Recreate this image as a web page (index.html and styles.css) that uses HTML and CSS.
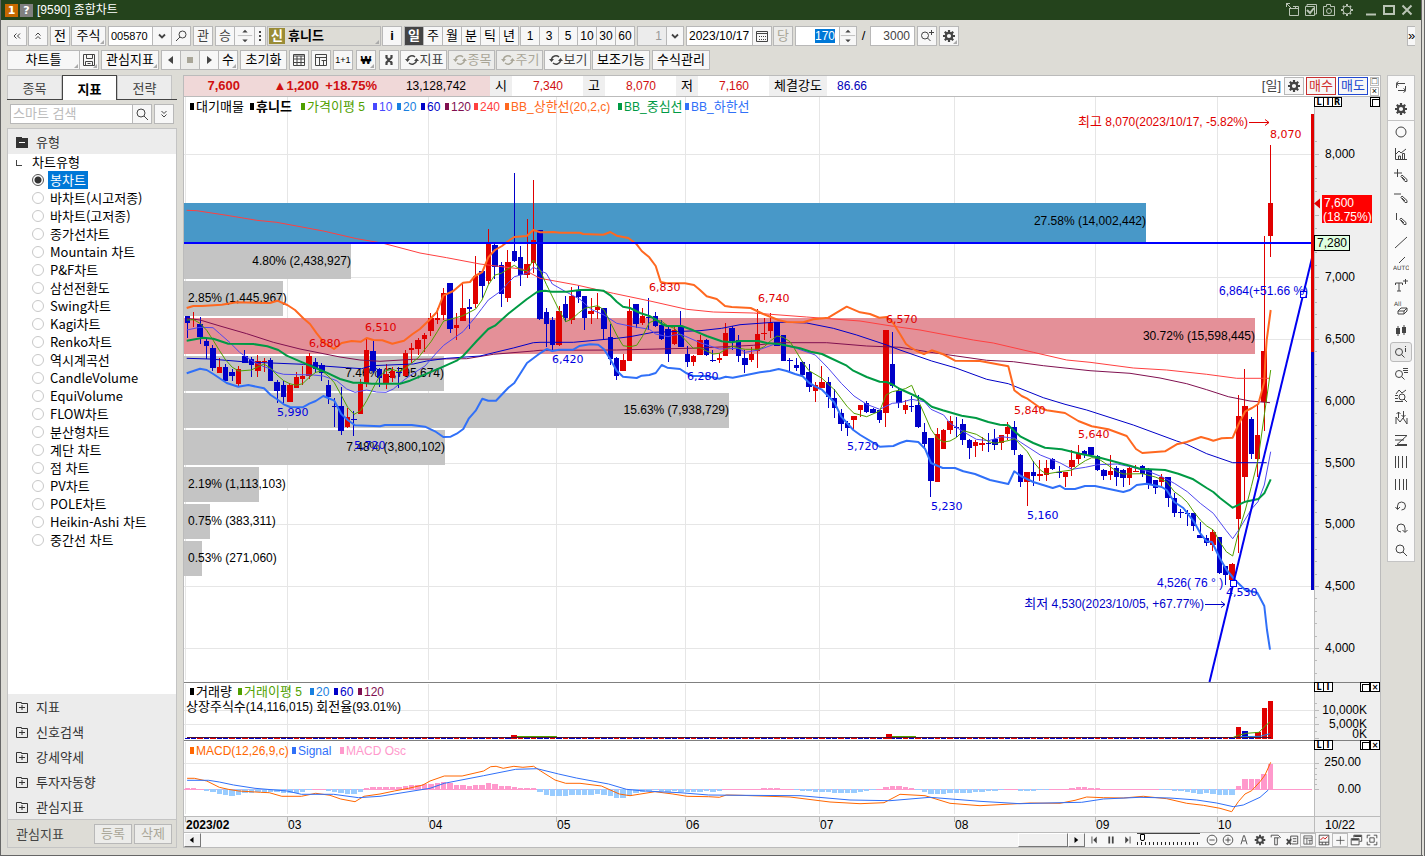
FILE: index.html
```html
<!DOCTYPE html>
<html lang="ko">
<head>
<meta charset="utf-8">
<title>[9590] 종합차트</title>
<link rel="stylesheet" href="styles.css">
</head>
<body>
<svg class="sprite" aria-hidden="true">
  <symbol id="gear" viewBox="0 0 16 16"><path d="M8 2v2.500M8 11.500V14M2 8h2.500M11.500 8H14M3.800 3.800l1.800 1.800M10.400 10.400l1.800 1.800M12.200 3.800l-1.800 1.800M5.600 10.400l-1.800 1.800" stroke-width="2.200"/><circle cx="8" cy="8" r="3.200" stroke-width="2.200"/></symbol>
  <symbol id="gear-thin" viewBox="0 0 16 16"><circle cx="8" cy="8" r="4"/><path d="M8 2v2M8 12v2M2 8h2M12 8h2M4 4l1 1M11 11l1 1M12 4l-1 1M5 11l-1 1" stroke-width="2"/></symbol>
  <symbol id="search" viewBox="0 0 16 16"><circle cx="7" cy="7" r="4"/><path d="M10 10l4 4"/></symbol>
  <symbol id="search-l" viewBox="0 0 16 16"><circle cx="9.500" cy="6.500" r="3.500"/><path d="M7 9l-4 4"/></symbol>
  <symbol id="down" viewBox="0 0 16 16"><path d="M5 6.500l3 3 3-3" stroke-width="1.800"/></symbol>
  <symbol id="spin" viewBox="0 0 16 20"><path d="M0 9.500h16" stroke="#bbb"/><path class="fill" d="M5 6l3-3 3 3zM5 14l3 3 3-3z"/></symbol>
  <symbol id="cycle" viewBox="0 0 16 16"><path d="M3.500 7a4.500 4 0 0 1 7.500-2M12.500 9a4.500 4 0 0 1-7.500 2" stroke-width="1.500"/><path class="fill" d="M1 7h5l-2.500 3zM10 9h5l-2.500-3z"/></symbol>
  <symbol id="save" viewBox="0 0 16 16"><path d="M2.500 2.500h11v11h-11zM5.500 2.500v4h6v-4M4.500 13.500v-4h7v4M6.500 11.500h3"/></symbol>
  <symbol id="table" viewBox="0 0 16 16"><path d="M2.500 2.500h11v11h-11zM2.500 4h11M2.500 7h11M2.500 10.500h11M6 4v9M10 4v9"/></symbol>
  <symbol id="panes" viewBox="0 0 16 16"><path d="M2.500 2.500h11v11h-11zM2.500 5.500h11M6.500 5.500v8M8.500 8.500h5M10.500 8.500v5"/></symbol>
  <symbol id="tool" viewBox="0 0 16 16"><path d="M5.500 3v2.500l5 5V13M10.500 3v2.500l-5 5V13" stroke-width="2.200"/></symbol>
  <symbol id="calendar" viewBox="0 0 16 16"><path d="M2.500 3.500h11v10h-11zM2 5.500h12"/><path d="M5 8.500h7M5 11.500h7" stroke-dasharray="1 1"/></symbol>
  <symbol id="stop" viewBox="0 0 16 16"><path class="fill" d="M5 5h6v6H5z"/></symbol>
  <symbol id="left" viewBox="0 0 16 16"><path class="fill" d="M10 4v8L5 8z"/></symbol>
  <symbol id="right" viewBox="0 0 16 16"><path class="fill" d="M6 4v8l5-4z"/></symbol>
  <symbol id="chev-l" viewBox="0 0 16 16"><path d="M7.500 5.500L5 8l2.500 2.500M11 5.500L8.500 8l2.500 2.500"/></symbol>
  <symbol id="chev-u" viewBox="0 0 16 16"><path d="M5.500 7.500L8 5l2.500 2.500M5.500 11L8 8.500l2.500 2.500"/></symbol>
  <symbol id="chev-d" viewBox="0 0 16 16"><path d="M5.500 5L8 7.500 10.500 5M5.500 8.500L8 11l2.500-2.500"/></symbol>
  <symbol id="dots" viewBox="0 0 8 16"><path class="fill" d="M3 3h2v2H3zM3 7h2v2H3zM3 11h2v2H3z"/></symbol>
  <symbol id="search-plus" viewBox="0 0 16 16"><circle cx="6" cy="7.500" r="3.500"/><path d="M8.500 10l3 3M12.500 2v5M10 4.500h5"/></symbol>
  <symbol id="pin-win" viewBox="0 0 16 16"><path d="M4.500 7v6.500h9v-9H8M4 6.500h10M10.500 4v2M1 1.500h4M1.500 1v4M2 2l4 4"/></symbol>
  <symbol id="checks" viewBox="0 0 16 16"><path d="M2.500 4.500h9v9h-9zM4 4V2.500h9.500V12H12"/><path d="M4 8l3 3 4-5" stroke-width="2"/></symbol>
  <symbol id="camera" viewBox="0 0 16 16"><path d="M2.500 4.500h3v-2h4v2h4v9h-11z"/><circle cx="8" cy="9" r="2.500"/></symbol>
  <symbol id="min" viewBox="0 0 16 16"><path d="M3 12.500h10" stroke-width="2"/></symbol>
  <symbol id="max" viewBox="0 0 16 16"><path d="M3 4h10v8H3z" stroke-width="2"/></symbol>
  <symbol id="close" viewBox="0 0 16 16"><path d="M3.500 3.500l9 9M12.500 3.500l-9 9" stroke-width="2"/></symbol>
  <symbol id="loop" viewBox="0 0 16 16"><path d="M3.500 9V6q0-1.500 1.500-1.500h7M5.500 2.500l-2.500 2 2.500 2M12.500 7v3q0 1.500-1.500 1.500H5M10.500 9.500l2.500 2-2.500 2"/></symbol>
  <symbol id="circle" viewBox="0 0 16 16"><circle cx="8" cy="8" r="5"/></symbol>
  <symbol id="bars" viewBox="0 0 16 16"><path d="M2.500 2v11.500H14M5.500 13v-3h2v3M9.500 13V7.500h2V13M3 8l3-3 2 2 5-4"/></symbol>
  <symbol id="draw-cross" viewBox="0 0 16 16"><path d="M1 5h8M4.500 1v8M8 8.500l1-1.500 5 4.500v2h-2zM9 9l3 3"/></symbol>
  <symbol id="draw-h" viewBox="0 0 16 16"><path d="M1 4h7M8 7.500l1-1.500 5 4.500v2h-2zM9 8l3 3"/></symbol>
  <symbol id="draw-v" viewBox="0 0 16 16"><path d="M3.500 1v7M7 7.500l1-1.500 5 4.500v2h-2zM8 8l3 3"/></symbol>
  <symbol id="slash" viewBox="0 0 16 16"><path d="M2 14L14 3"/></symbol>
  <symbol id="auto" viewBox="0 0 16 16"><path d="M6 7l6-6"/><text x="0" y="14">AUTO</text></symbol>
  <symbol id="text-plus" viewBox="0 0 16 16"><path d="M2.500 7V5h7v2M6 5v8M4 13h4M10 3h5M12.500 1v5"/></symbol>
  <symbol id="all" viewBox="0 0 16 16"><text x="1" y="6">All</text><path d="M5 11l3-3h6l-3 3zM5 11v3h6v-3M14 8v3l-3 3"/></symbol>
  <symbol id="candles" viewBox="0 0 16 16"><path class="fill" d="M3 6h4v6H3zM9 5h4v6H9z"/><path d="M5 4v10M11 3v10"/></symbol>
  <symbol id="search-i" viewBox="0 0 16 16"><circle cx="6" cy="8" r="3.500"/><path d="M8.500 10.500l3 3M12.500 2v1M12.500 4v4"/></symbol>
  <symbol id="search-list" viewBox="0 0 16 16"><circle cx="6" cy="8" r="3.500"/><path d="M8.500 10.500l3 3M10 2.500h5M10 4.500h5M11 6.500h4"/></symbol>
  <symbol id="search-chart" viewBox="0 0 16 16"><path d="M3 6l3-4 3 3 4-3M2 7.500h3M2 10.500h3M2 13.500h8"/><circle cx="9" cy="9" r="3"/><path d="M11 11l3 3"/></symbol>
  <symbol id="signal" viewBox="0 0 16 16"><path d="M3 14V7l4 5 3-4 4 6V8M5.500 8V2M3.500 4l2-2 2 2M10.500 1v7M8.500 5l2 2 2-2"/></symbol>
  <symbol id="zig" viewBox="0 0 16 16"><path d="M2 3.500h12L4 12.500h10M2 8h9M2 13.500h12"/></symbol>
  <symbol id="fib" viewBox="0 0 16 16"><path d="M2.500 2v12M5.500 2v12M9.500 2v12M13.500 2v12"/></symbol>
  <symbol id="vlines" viewBox="0 0 16 16"><path d="M2.500 3v11M6.500 3v11M10.500 3v11M13.500 3v11"/></symbol>
  <symbol id="undo" viewBox="0 0 16 16"><path d="M4.500 11V8a4 4 0 1 1 4 4M2.500 9l2 2.500 2.500-2.500"/></symbol>
  <symbol id="redo" viewBox="0 0 16 16"><path d="M8 12a4 4 0 1 1 4-4v4M9.500 10l2.500 2.500 2.500-2.500"/></symbol>
  <symbol id="minus-c" viewBox="0 0 16 16"><circle cx="8" cy="8" r="5.500"/><path d="M5 8h6"/></symbol>
  <symbol id="plus-c" viewBox="0 0 16 16"><circle cx="8" cy="8" r="5.500"/><path d="M5 8h6M8 5v6"/></symbol>
  <symbol id="compass" viewBox="0 0 16 16"><path d="M4.500 13l3-10h1l3 10M6 9h4"/></symbol>
  <symbol id="hammer" viewBox="0 0 16 16"><path d="M2.500 5V2.500h8l3 3M6.500 5.500v8h3v-8M6 5.500h6"/></symbol>
  <symbol id="xls" viewBox="0 0 16 16"><path d="M6.500 10V3.500h8v9H8M9 6.500h4M9 9.500h4"/><path d="M2 7l5 6M7 7l-5 6" stroke-width="2"/></symbol>
  <symbol id="chart-red" viewBox="0 0 16 16"><path d="M2.500 2.500h11v11h-11zM2.500 10.500h11M6 10.500v3M10 10.500v3"/><path d="M4 8l3-3 2 2 3-3" stroke="#c00"/></symbol>
  <symbol id="plus" viewBox="0 0 16 16"><path d="M8.500 3v11M3 8.500h11"/></symbol>
  <symbol id="windows" viewBox="0 0 16 16"><path d="M5.500 5V2.500h9v7H12M2.500 6.500h9v7h-9z"/><path d="M3 7.500h8M6 3.500h8" stroke-width="2"/></symbol>
  <symbol id="full" viewBox="0 0 16 16"><path d="M2.500 6V2.500H6M10 2.500h3.500V6M13.500 10v3.500H10M6 13.500H2.500V10M5.500 5.500h5v5h-5z"/></symbol>
  <symbol id="folder" viewBox="0 0 12 12"><path d="M.5 1.500h5v1h6v9H.5zM3 6.500h6M6 4v5"/></symbol>
  <symbol id="folder-open" viewBox="0 0 12 12"><path class="fill" d="M0 1h6v1h6v10H0z"/><path d="M3 6.500h6" stroke="#fff"/></symbol>
  <symbol id="first" viewBox="0 0 16 16"><path d="M4.500 4v8"/><path class="fill" d="M10 4v8L6 8z"/></symbol>
  <symbol id="pause" viewBox="0 0 16 16"><path d="M6 4v8M10 4v8" stroke-width="2"/></symbol>
  <symbol id="last" viewBox="0 0 16 16"><path d="M11.500 4v8"/><path class="fill" d="M6 4v8l4-4z"/></symbol>
</svg>

<div class="window">
  <header class="titlebar">
    <span class="win-no">1</span><span class="win-help">?</span>
    <h1 class="win-title">[9590] 종합차트</h1>
    <div class="win-actions">
      <button class="bare" aria-label="분리"><svg><use href="#pin-win"/></svg></button>
      <button class="bare" aria-label="선택"><svg><use href="#checks"/></svg></button>
      <button class="bare" aria-label="캡처"><svg><use href="#camera"/></svg></button>
      <button class="bare" aria-label="설정"><svg><use href="#gear-thin"/></svg></button>
    </div>
    <div class="win-actions">
      <button class="bare" aria-label="최소화"><svg><use href="#min"/></svg></button>
      <button class="bare" aria-label="최대화"><svg><use href="#max"/></svg></button>
      <button class="bare" aria-label="닫기"><svg><use href="#close"/></svg></button>
    </div>
  </header>

  <div class="toolbars">
    <div class="bar">
      <button class="btn w20" aria-label="접기"><svg><use href="#chev-l"/></svg></button>
      <button class="btn w20 near" aria-label="위로"><svg><use href="#chev-u"/></svg></button>
      <button class="btn w20">전</button>
      <button class="btn w34 corner near">주식</button>
      <div class="group">
        <input class="field code w45" aria-label="종목코드" value="005870">
        <button class="btn w20" aria-label="목록"><svg><use href="#down"/></svg></button>
        <button class="btn w20" aria-label="종목 찾기"><svg><use href="#search-l"/></svg></button>
      </div>
      <button class="btn w20 grey">관</button>
      <div class="group">
        <button class="btn w20 grey">승</button>
        <button class="btn w21" aria-label="위아래"><svg class="tall"><use href="#spin"/></svg></button>
        <button class="btn w12" aria-label="더보기"><svg class="slim"><use href="#dots"/></svg></button>
      </div>
      <div class="stock near corner"><span class="badge">신</span><b>휴니드</b></div>
      <button class="btn w20 near"><b>i</b></button>
      <div class="group">
        <button class="btn w20 on">일</button><button class="btn w20">주</button><button class="btn w20">월</button><button class="btn w20">분</button><button class="btn w20">틱</button><button class="btn w20">년</button>
      </div>
      <div class="group near num">
        <button class="btn w20">1</button><button class="btn w20">3</button><button class="btn w20">5</button><button class="btn w20">10</button><button class="btn w20">30</button><button class="btn w20">60</button>
      </div>
      <div class="group">
        <input class="field w30 end off" aria-label="주기" value="1">
        <button class="btn w18" aria-label="주기 목록"><svg><use href="#down"/></svg></button>
      </div>
      <div class="group">
        <input class="field w67" aria-label="날짜" value="2023/10/17">
        <button class="btn w20" aria-label="달력"><svg><use href="#calendar"/></svg></button>
      </div>
      <button class="btn w20 dim near">당</button>
      <div class="group">
        <span class="field w45 end"><span class="picked">170</span></span>
        <button class="btn w18" aria-label="개수 조절"><svg class="tall"><use href="#spin"/></svg></button>
      </div>
      <span class="slash">/</span>
      <input class="field w45 end" aria-label="전체 개수" value="3000">
      <button class="btn w20" aria-label="확대"><svg><use href="#search-plus"/></svg></button>
      <button class="btn w20 corner" aria-label="환경설정"><svg><use href="#gear"/></svg></button>
      <button class="btn w8 last">»</button>
    </div>
    <div class="bar">
      <div class="group">
        <button class="btn w72 corner">차트틀</button>
        <button class="btn w20 corner" aria-label="저장"><svg><use href="#save"/></svg></button>
      </div>
      <button class="btn w58 corner">관심지표</button>
      <div class="group">
        <button class="btn w20" aria-label="이전"><svg><use href="#left"/></svg></button>
        <button class="btn w20 dim" aria-label="정지"><svg><use href="#stop"/></svg></button>
        <button class="btn w20" aria-label="다음"><svg><use href="#right"/></svg></button>
        <button class="btn w20 corner">수</button>
      </div>
      <button class="btn w46">초기화</button>
      <button class="btn w20" aria-label="표"><svg><use href="#table"/></svg></button>
      <button class="btn w20" aria-label="분할"><svg><use href="#panes"/></svg></button>
      <button class="btn w20 tiny">1+1</button>
      <button class="btn w20 corner far won"><b>₩</b></button>
      <button class="btn w20 far" aria-label="도구"><svg><use href="#tool"/></svg></button>
      <button class="btn w46 near grey"><svg><use href="#cycle"/></svg>지표</button>
      <button class="btn w46 near dim"><svg><use href="#cycle"/></svg>종목</button>
      <button class="btn w46 near dim"><svg><use href="#cycle"/></svg>주기</button>
      <button class="btn w46 near grey"><svg><use href="#cycle"/></svg>보기</button>
      <button class="btn w58 near">보조기능</button>
      <button class="btn w58">수식관리</button>
    </div>
  </div>

  <main class="main">
    <aside class="side">
      <nav class="tabs"><button class="tab">종목</button><button class="tab active">지표</button><button class="tab">전략</button></nav>
      <div class="find">
        <div class="group grow">
          <input class="field grow" aria-label="스마트 검색" placeholder="스마트 검색">
          <button class="btn w20" aria-label="검색"><svg><use href="#search"/></svg></button>
        </div>
        <button class="btn w20" aria-label="펼치기"><svg><use href="#chev-d"/></svg></button>
      </div>
      <div class="tree">
        <button class="folder"><svg><use href="#folder-open"/></svg>유형</button>
        <div class="branch">차트유형</div>
        <div class="leaves" id="types"></div>
        <div class="folders">
          <button class="folder"><svg><use href="#folder"/></svg>지표</button>
          <button class="folder"><svg><use href="#folder"/></svg>신호검색</button>
          <button class="folder"><svg><use href="#folder"/></svg>강세약세</button>
          <button class="folder"><svg><use href="#folder"/></svg>투자자동향</button>
          <button class="folder"><svg><use href="#folder"/></svg>관심지표</button>
        </div>
        <div class="side-foot"><span class="grow">관심지표</span><button class="btn w38 dim">등록</button><button class="btn w38 dim">삭제</button></div>
      </div>
    </aside>

    <section class="chart">
      <div class="quote">
        <div class="now"><b class="c1">7,600</b><b class="c2">▲1,200</b><b class="c3">+18.75%</b><span class="c4">13,128,742</span></div>
        <span class="key">시</span><span class="val">7,340</span>
        <span class="key">고</span><span class="val">8,070</span>
        <span class="key">저</span><span class="val">7,160</span>
        <span class="key wide">체결강도</span><span class="power">86.66</span>
        <span class="period">[일]</span>
        <button class="btn w20 q" aria-label="차트 설정"><svg><use href="#gear"/></svg></button>
        <button class="btn w30 q buy">매수</button>
        <button class="btn w30 q sell">매도</button>
        <div class="mini"><button aria-label="확대">□</button><button aria-label="닫기">×</button></div>
      </div>
      <div class="panel price"><svg id="price" viewBox="184 97 1196 585"></svg>
        <div class="pane-l"><button>L</button><button>I</button><button>R</button></div><div class="pane-r"><button class="box" aria-label="최대화"></button></div></div>
      <div class="panel volume"><svg id="volume" viewBox="184 682 1196 58"></svg>
        <div class="pane-l"><button>L</button><button>I</button></div><div class="pane-r"><button class="box" aria-label="최대화"></button><button aria-label="닫기">×</button></div></div>
      <div class="panel macd"><svg id="macd" viewBox="184 740 1196 76"></svg>
        <div class="pane-l"><button>L</button><button>I</button></div><div class="pane-r"><button class="box" aria-label="최대화"></button><button aria-label="닫기">×</button></div></div>
      <div class="panel time"><svg id="time" viewBox="184 816 1196 17"></svg></div>
      <div class="controls">
        <button class="scroll" aria-label="왼쪽"><svg><use href="#left"/></svg></button>
        <div class="track"><div class="thumb"></div></div>
        <button class="scroll" aria-label="오른쪽"><svg><use href="#right"/></svg></button>
        <div class="icons">
          <button class="bare" aria-label="처음"><svg><use href="#first"/></svg></button>
          <button class="bare" aria-label="일시정지"><svg><use href="#pause"/></svg></button>
          <button class="bare" aria-label="마지막"><svg><use href="#last"/></svg></button>
        </div>
        <input class="speed" type="range" aria-label="속도" min="0" max="100" value="6">
        <div class="icons">
          <button class="bare" aria-label="축소"><svg><use href="#minus-c"/></svg></button>
          <button class="bare" aria-label="확대"><svg><use href="#plus-c"/></svg></button>
          <button class="bare" aria-label="작도"><svg><use href="#compass"/></svg></button>
          <button class="bare" aria-label="설정"><svg><use href="#gear"/></svg></button>
          <button class="bare" aria-label="도구"><svg><use href="#hammer"/></svg></button>
          <button class="bare" aria-label="엑셀"><svg><use href="#xls"/></svg></button>
          <button class="bare framed" aria-label="목록"><svg><use href="#panes"/></svg></button>
          <button class="bare" aria-label="차트"><svg><use href="#chart-red"/></svg></button>
          <button class="bare framed" aria-label="십자선"><svg><use href="#plus"/></svg></button>
          <button class="bare" aria-label="창"><svg><use href="#windows"/></svg></button>
          <button class="bare" aria-label="전체화면"><svg><use href="#full"/></svg></button>
        </div>
      </div>
    </section>

    <aside class="draw" id="draw"></aside>
  </main>
</div>
<script src="chart.js"></script>
</body>
</html>
```
FILE: styles.css
```css
* { box-sizing: border-box; }
html, body { height: 100%; margin: 0; }
body, button, input {
  font-family: "Liberation Sans", "Noto Sans CJK KR", sans-serif;
  font-size: 13px;
  color: #000;
}
button { padding: 0; margin: 0; }
svg { fill: none; stroke: currentColor; }
svg .fill { fill: currentColor; stroke: none; }
symbol text { font: 6px "DejaVu Sans", sans-serif; fill: currentColor; stroke: none; }
.sprite { display: none; }
.grow { flex: 1; min-width: 0; }

.window {
  display: flex;
  flex-direction: column;
  min-height: 100vh;
  background: #dddcd6;
  border-left: 1px solid #666;
  border-right: 4px double #666;
  border-bottom: 1px solid #666;
}
.titlebar {
  display: flex;
  align-items: center;
  height: 20px;
  padding: 0 6px 0 4px;
  background: #24431c;
  color: #fff;
}
.win-no, .win-help {
  width: 13px;
  height: 13px;
  margin-right: 2px;
  background: #c86800;
  font: bold 11px/13px "DejaVu Sans", sans-serif;
  text-align: center;
}
.win-help { background: #808080; margin-right: 4px; }
.win-title { flex: 1; margin: 0; font-size: 12px; font-weight: 400; line-height: 20px; }
.win-actions { display: flex; gap: 2px; margin-left: 8px; color: #b9c4b5; }
.bare { width: 16px; height: 16px; border: 0; background: none; color: inherit; }
.bare svg { display: block; width: 16px; height: 16px; }

.toolbars { display: flex; flex-direction: column; gap: 4px; padding: 6px 6px 7px; height: 55px; }
.bar { display: flex; gap: 2px; height: 20px; }
.group { display: flex; }
.group > * + * { margin-left: -1px; }
.bar .near { margin-left: -1px; }
.bar .far { margin-left: 1px; }
.bar .last { margin-left: auto; border-right: 0; }
.btn {
  display: flex;
  align-items: center;
  justify-content: center;
  position: relative;
  height: 20px;
  border: 1px solid #b8b8b8;
  background: #f7f7f7;
  line-height: 18px;
  white-space: nowrap;
  overflow: hidden;
  flex: none;
}
.btn svg { width: 16px; height: 16px; flex: none; color: #444; }
.btn svg.tall { height: 18px; }
.btn svg.slim { width: 8px; }
.corner::after {
  content: "";
  position: absolute;
  right: 1px;
  bottom: 1px;
  border: 2px solid #aaa;
  border-top-color: transparent;
  border-left-color: transparent;
}
.num .btn { font-size: 12px; }
.tiny { font-size: 9px; }
.won { font-size: 11px; }
.grey { color: #444; }
.dim { color: #a9a698; background: #ececea; }
.dim svg { color: #a9a698; }
.on { background: #444; color: #fff; font-weight: 700; }
.field {
  height: 20px;
  padding: 0 2px;
  border: 1px solid #b8b8b8;
  background: #fff;
  font-size: 12px;
  line-height: 18px;
}
.code { font-size: 11px; }
.field::placeholder { color: #bbb; font-size: 13px; }
.end { text-align: right; padding-right: 4px; color: #444; }
.off { background: #ececec; color: #999; }
.picked { background: #0078d7; color: #fff; }
.slash { width: 9px; text-align: center; line-height: 20px; }
.stock {
  display: flex;
  align-items: center;
  gap: 3px;
  position: relative;
  width: 114px;
  padding-left: 1px;
  border: 1px solid #b8b8b8;
  line-height: 16px;
}
.badge { width: 16px; height: 16px; background: #9a8c36; color: #fff; text-align: center; font-weight: 700; }
.w8 { width: 8px; } .w12 { width: 12px; } .w18 { width: 18px; } .w20 { width: 20px; } .w21 { width: 21px; }
.w30 { width: 30px; } .w34 { width: 35px; } .w38 { width: 38px; } .w45 { width: 45px; } .w46 { width: 47px; }
.w58 { width: 58px; } .w67 { width: 67px; } .w72 { width: 73px; }

.main { display: flex; flex: 1; padding: 0 6px 7px; }

.side { display: flex; flex-direction: column; width: 170px; margin-right: 6px; }
.tabs { display: flex; height: 25px; padding-right: 5px; border-bottom: 1px solid #444; }
.tab { flex: 1; border: 1px solid #c4c4c4; border-bottom: 0; background: #ececec; color: #444; height: 24px; }
.tab.active { height: 25px; background: #fff; border-color: #444; color: #000; font-weight: 700; }
.find { display: flex; gap: 2px; padding: 4px 3px; }
.find .field { width: 80px; }
.tree { display: flex; flex-direction: column; flex: 1; border: 1px solid #c4c4c4; background: #fff; }
.folder {
  display: flex;
  align-items: center;
  gap: 8px;
  width: 100%;
  height: 25px;
  padding-left: 8px;
  border: 0;
  background: #ececec;
  color: #333;
}
.folder svg { width: 12px; height: 12px; }
.branch { height: 17px; padding-left: 24px; line-height: 17px; position: relative; }
.branch::before { content: ""; position: absolute; left: 8px; top: 6px; width: 5px; height: 5px; border: solid #444; border-width: 0 0 1px 1px; }
.leaves { flex: 1; padding-left: 24px; }
.leaf { display: flex; align-items: center; height: 18px; line-height: 18px; font-size: 13px; font-family: "Noto Sans CJK KR", sans-serif; }
.leaf label { padding: 0 2px; }
.leaf input { appearance: none; width: 12px; height: 12px; margin: 0 4px 0 0; border: 1px solid #c8c8c8; border-radius: 50%; background: #fff; }
.leaf input:checked { border-color: #555; background: radial-gradient(#333 3px, #fff 4px); }
.leaf input:checked + label { background: #0078d7; color: #fff; }
.side-foot { display: flex; align-items: center; gap: 2px; height: 28px; padding: 0 4px 0 8px; border-top: 1px solid #c4c4c4; background: #dddcd6; color: #444; }

.chart { display: flex; flex-direction: column; flex: 1; min-width: 0; border: 1px solid #bbb; background: #fff; }
.quote { display: flex; align-items: center; height: 21px; border-bottom: 1px solid #bbb; line-height: 20px; font-size: 12px; }
.now { display: grid; grid-template-columns: 56px 79px 58px 1fr; width: 306px; background: #f0d8d8; color: #d01010; text-align: right; }
.now b { font-size: 13px; }
.now .c4 { padding-right: 24px; color: #000; }
.key { width: 22px; background: #efefef; text-align: center; font-size: 13px; }
.key.wide { width: 58px; }
.val { width: 71px; padding-right: 20px; color: #d01010; text-align: right; }
.power { padding-left: 10px; color: #0000b8; }
.period { margin-left: auto; margin-right: 3px; font-size: 13px; color: #444; }
.q { height: 18px; margin-right: 2px; }
.buy { border-color: #c83030; color: #d03030; }
.sell { border-color: #2048d0; color: #2048d0; }
.mini { display: grid; gap: 1px; margin-right: 1px; }
.mini button { width: 9px; height: 9px; border: 1px solid #bbb; background: #fff; font-size: 9px; line-height: 6px; overflow: hidden; }

.panel { position: relative; min-height: 0; }
.panel > svg { display: block; width: 100%; height: 100%; stroke: none; }
.price { flex: 585 1 0; }
.volume { flex: 58 1 0; }
.macd { flex: 76 1 0; }
.time { flex: 17 1 0; }
.pane-l, .pane-r { position: absolute; top: 0; right: 0; display: flex; }
.pane-l { right: auto; left: calc(100% - 66px); }
.pane-l button, .pane-r button {
  width: 10px;
  height: 10px;
  margin-right: -1px;
  border: 1px solid #000;
  background: #fff;
  font: bold 8px/7px "DejaVu Sans", sans-serif;
  overflow: hidden;
}
.pane-r button { margin: 0; }
.pane-r .box { padding: 1px; }
.pane-r .box::before { content: ""; display: block; width: 6px; height: 6px; border: 1px solid #000; }
.num-label { font: 12px "Liberation Sans", sans-serif; }
.ko-label { font: 13px "Noto Sans CJK KR", sans-serif; }
.bold-label { font-weight: 700; }
.peak { font: 11px "DejaVu Sans", sans-serif; }

.controls { display: flex; height: 14px; background: #f7f7f7; color: #444; }
.scroll { width: 17px; height: 14px; border: 1px solid #fff; border-right-color: #777; border-bottom-color: #777; background: #f0f0f0; }
.scroll svg { display: block; width: 14px; height: 12px; color: #000; }
.track { display: flex; flex: 1; justify-content: flex-end; background: #f6f6f6; }
.thumb { width: 50px; border: 1px solid #fff; border-right-color: #777; border-bottom-color: #777; background: #f0f0f0; }
.icons { display: flex; margin-left: 2px; }
.controls .bare { height: 14px; }
.controls .bare svg { height: 14px; }
.controls .framed { border: 1px solid #bbb; }
.controls .framed svg { width: 14px; height: 12px; }
.speed {
  appearance: none;
  width: 63px;
  height: 12px;
  margin: 0 2px;
  border-top: 1px solid #444;
  background: repeating-linear-gradient(90deg, #222 0 1px, transparent 1px 4px) left bottom / 100% 3px no-repeat;
}
.speed::-webkit-slider-thumb { appearance: none; width: 5px; height: 7px; margin-bottom: 4px; border: 1px solid #000; border-radius: 0 0 2px 2px; background: #fff; }

.draw { align-self: flex-start; display: flex; flex-direction: column; align-items: center; width: 28px; margin-left: 6px; border: 1px solid #c4c4c4; background: #fafafa; color: #444; }
.draw .bare { display: flex; align-items: center; justify-content: center; width: 22px; height: 22px; }
.draw .set { display: flex; flex-direction: column; align-items: center; width: 100%; border-bottom: 1px solid #c4c4c4; }
.draw .set:last-child { border-bottom: 0; }
.draw .pressed { height: 20px; margin: 1px 0; border: 1px solid #bbb; border-radius: 3px; background: #ececec; }
```
FILE: chart.js
```js
const NS = 'http://www.w3.org/2000/svg';
const X0 = 187.3, STEP = 6.41;
const RED = '#e00000', BLUE = '#0000c8', GRID = '#e6e6e6';

function add(parent, tag, attrs, text) {
  const n = document.createElementNS(NS, tag);
  for (const k in attrs) n.setAttribute(k, attrs[k]);
  if (text !== undefined) n.textContent = text;
  parent.appendChild(n);
  return n;
}
function rect(p, x, y, w, h, fill) { return add(p, 'rect', { x, y, width: w, height: h, fill, 'shape-rendering': 'crispEdges' }); }
// Left edge of day i; bodies fill the day's slot less one pixel.
function slot(i) { return Math.ceil(X0 + STEP * (i - 0.5)); }
function dayBar(p, i, y, h, fill) { rect(p, slot(i), y, slot(i + 1) - slot(i) - 1, h, fill); }
// Hangul runs and Latin runs use different text sizes.
function label(p, x, y, str, fill, anchor, extra) {
  const t = add(p, 'text', { x, y, fill, 'text-anchor': anchor || 'start', 'xml:space': 'preserve' });
  for (const run of str.match(/[가-힣]+|[^가-힣]+/g)) {
    add(t, 'tspan', { class: (/[가-힣]/.test(run) ? 'ko-label ' : 'num-label ') + (extra || '') }, run);
  }
}
function legend(p, y, items) {
  for (const [x, str, color, extra] of items) {
    rect(p, x, y - 8, 4, 7, color);
    label(p, x + 6, y, str, color, 'start', extra);
  }
}
// Each part holds its origin, its units per pixel across and a flat list of points.
function curve(p, color, width, parts) {
  const pts = [];
  for (const [ox, oy, k, data] of parts) {
    const v = data.trim().split(/[\s,]+/).map(Number);
    for (let i = 0; i < v.length; i += 2) pts.push((ox + v[i] / k).toFixed(1) + ',' + (oy + v[i + 1] / 3).toFixed(1));
  }
  add(p, 'polyline', { points: pts.join(' '), fill: 'none', stroke: color, 'stroke-width': width, 'stroke-linejoin': 'round' });
}
const MONTHS = [[185, '2023/02'], [287, '03'], [428, '04'], [556, '05'], [685, '06'], [819, '07'], [954, '08'], [1095, '09'], [1217, '10']];

/* ---------- price ---------- */
const P = document.getElementById('price');
for (const [x] of MONTHS) rect(P, x, 97, 1, 583, GRID);
const py = v => 153.5 + (8000 - v) * 0.1236;
for (let v = 8000; v >= 4000; v -= 500) if (v !== 7500) rect(P, 184, Math.round(py(v)), 1130, 1, GRID);
for (const [y, h, x2, c] of [[203, 40, 1146, '#4898c8'], [244, 35, 351, '#c4c4c4'], [281, 35, 283, '#c4c4c4'], [318, 36, 1255, '#e49098'],
  [356, 35, 444, '#c4c4c4'], [393, 35, 729, '#c4c4c4'], [430, 35, 445, '#c4c4c4'], [467, 35, 259, '#c4c4c4'], [504, 35, 210, '#c4c4c4'], [541, 35, 202, '#c4c4c4']])
  rect(P, 184, y, x2 - 184, h, c);
for (const [x, y, s, a] of [[1146, 225, '27.58% (14,002,442)', 'end'], [351, 265, '4.80% (2,438,927)', 'end'], [188, 302, '2.85% (1,445,967)'],
  [1255, 340, '30.72% (15,598,445)', 'end'], [444, 377, '7.46% (3,795,674)', 'end'], [729, 414, '15.63% (7,938,729)', 'end'],
  [445, 451, '7.48% (3,800,102)', 'end'], [188, 488, '2.19% (1,113,103)'], [188, 525, '0.75% (383,311)'], [188, 562, '0.53% (271,060)']])
  label(P, x, y, s, '#000', a);

// direction, high, body top, body bottom, low
const CANDLES = [
  [0, 160, `D467,468,488,535 U455,478,481,502 D472,491,530,552 D535,542,558,596 D556,564,624,634 U594,621,638,639 D612,620,662,663 D627,635,648,662
  U617,628,671,680 D571,588,609,610 D590,598,615,651 U585,602,633,651 U595,602,605,635 D594,600,662,664 D660,666,692,728 D664,674,711,728
  U670,674,726,727 U637,651,684,685 U618,647,658,674 U580,587,648,656 D594,606,628,640 D610,616,640,664 D660,674,712,731 D715,738,741,800
  D680,738,812,825 U743,771,801,803 D753,777,780,828 U656,671,762,762 U535,569,668,680 D543,572,632,640 D625,628,655,682 U612,641,671,686
  U620,634,655,665 D620,636,639,684 U570,578,648,649 U549,564,570,608 U534,541,567,584 U520,524,538,576 U460,473,513,528 U443,475,480,492
  U385,399,465,480 D369,369,507,520 U460,494,504,540 U369,444,483,484 D417,441,446,507 U289,347,432,444 D330,333,378,414 U207,249,362,371
  D250,255,320,357 D306,315,402,440 U270,306,414,426 D39,273,303,306 D258,291,346,378 U177,312,345,354 U60,240,309,339 D210,210,476,480`],
  [56, 220, `D264,276,312,380 D291,300,374,390 U258,273,374,378 D228,252,294,306 U201,228,300,312 D198,210,231,248 D228,228,294,330 U234,273,282,312
  U218,261,270,296 D264,264,326,357 D312,351,417,436 D412,414,468,480 U402,420,453,454 U237,273,423,424 D252,252,312,324 U264,288,309,315
  D234,290,294,330 D276,288,318,320 D300,315,357,360 D320,327,402,426 U318,330,372,375 D273,321,381,382 D378,402,426,441 U405,408,426,438
  U345,360,405,405 D357,360,405,408 D390,420,423,426 U400,414,420,429 U309,339,408,408 D318,324,363,390 D345,360,408,426 D390,414,435,459
  U380,402,420,426 U267,342,393,444 U294,339,342,360 U279,309,333,354 D305,306,378,378 D345,345,423,423 D414,420,423,454 D414,435,444,453
  D423,426,465,468 D432,456,501,516 U486,495,513,546 U438,486,504,504 D471,486,531,564 D507,534,564,594 D567,579,612,633 D603,609,624,648
  U588,588,600,627 U555,555,570,591 D543,549,576,579 D564,567,579,580 D570,570,600,609 U330,330,579,621 D336,432,498,504 D504,513,549,564
  U540,555,570,582 D528,558,561,576`],
  [114, 340, `D165,195,261,264 D249,276,312,324 D294,294,423,471 U264,282,426,426 U267,270,327,327 U228,243,270,282 D231,261,264,291 D237,252,300,315
  D297,300,324,357 U300,306,318,351 U291,309,315,333 D279,308,311,336 D267,297,315,330 U285,285,309,330 U246,261,282,300 D243,261,330,345
  D342,345,426,441 U396,396,426,498 D363,396,408,438 U360,402,407,423 U360,384,405,423 D354,357,387,390 D378,396,399,414 U396,396,411,441
  U330,360,381,408 U315,339,357,372 D330,333,345,354 D321,321,345,346 D345,348,390,393 D387,390,408,420 U345,393,405,420 D378,384,411,438
  D387,390,414,441 U378,384,414,435 U375,393,396,396 D375,378,402,411 D384,390,435,447 D420,420,444,462 U402,411,426,438 D411,411,474,501
  D459,474,519,531 D507,516,519,534 D510,519,522,558 D519,519,558,573 D546,585,594,594 D585,594,609,618 U570,576,615,633 D591,591,699,702
  D678,678,705,735 U669,672,720,720 U165,228,537,639 U87,198,411,483 D231,237,342,357 U195,285,357,411 U-312,33,186,273 U-585,-411,-312,-249`],
];
for (const [start, base, rows] of CANDLES) {
  rows.trim().split(/\s+/).forEach((row, i) => {
    const [h, t, b, l] = row.slice(1).split(',').map(v => Math.round(base + v / 3));
    const x = Math.floor(X0 + STEP * (start + i));
    const c = row[0] === 'U' ? RED : BLUE;
    rect(P, x, h, 1, Math.max(1, l - h), c);
    dayBar(P, start + i, t, Math.max(1, b - t), c);
  });
}
curve(P, '#ff4040', 1, [[180, 160, 3, '20,151 50,152 140,166 230,181 290,187 430,213 530,236 610,250 720,279 800,293 900,312 1030,328'],
  [540, 220, 3, '0,175 110,195 220,220 330,243 440,268 520,276 640,279 800,291 960,303 1060,319'],
  [900, 340, 3, '60,-30 220,0 280,9 400,37 500,60 570,67 700,84 800,90 920,103 1010,115 1110,115']]);
curve(P, '#801050', 1, [[180, 160, 3, '20,475 60,480 120,498 200,521 280,547 360,567 480,591 540,600 600,604 700,598 860,596 940,583 1060,573'],
  [540, 220, 3, '0,391 230,390 480,384 640,376 720,368 860,368 980,378'],
  [900, 340, 3, '0,22 100,38 260,61 340,65 430,77 570,92 690,100 780,114 860,131 920,149 985,170 1050,183 1110,188']]);
curve(P, '#0000c8', 1, [[180, 160, 3, '20,595 90,597 200,606 370,613 400,616 500,623 545,626 575,617 700,612 740,603 800,595 900,588 1000,564 1060,548'],
  [540, 220, 3, '0,367 100,367 230,355 270,350 340,337 480,332 545,325 600,314 700,307 740,307 800,309 880,325 950,345 1040,375'],
  [900, 340, 3, '0,30 95,63 165,83 260,118 325,131 430,173 495,193 560,210 700,255 830,303 860,313 920,341 998,368 1100,368']]);
curve(P, '#5048f0', 1, [[180, 160, 3, '20,510 60,502 99,503 118,520 150,548 180,578 220,605 252,620 272,627 291,638 311,643 400,645 430,648 470,662 500,687 525,697 560,690 590,696 618,697 640,687 672,660 700,640 735,618 770,578 791,556 849,515 887,470 906,445 925,420 964,392 983,370 1003,350 1041,340 1060,322'],
  [540, 220, 3, '0,152 19,160 37,192 77,215 120,238 153,268 192,285 230,310 270,318 328,328 347,342 384,350 403,345 423,343 480,368 538,387 596,385 616,397 655,390 711,370 769,385 826,405 865,445 904,490 942,528 980,553 1019,568 1057,550'],
  [900, 340, 3, '0,188 35,178 73,185 93,208 131,225 150,250 190,275 229,298 266,302 305,290 344,295 362,307 421,345 479,368 516,388 556,382 593,374 652,372 690,380 747,395 785,410 823,430 862,455 901,490 940,520 979,572 998,596 1016,570 1054,508 1074,485 1093,435 1112,335']]);
curve(P, '#50a000', 1, [[180, 160, 3, '20,480 41,479 60,490 80,511 99,540 118,571 137,600 157,622 176,633 214,630 252,612 272,625 291,645 311,662 329,671 349,676 368,671 388,652 407,637 426,633 445,648 463,668 484,706 503,742 522,763 541,753 560,722 579,685 598,650 618,632 637,628 656,635 675,626 694,610 714,594 733,570 753,545 772,515 791,483 810,478 849,467 887,447 906,420 925,375 945,345 964,340 983,327 1003,316 1022,330 1041,332 1060,300'],
  [540, 220, 3, '0,150 19,193 57,270 77,305 96,297 115,280 134,265 173,257 192,270 211,307 230,345 249,377 270,380 290,376 307,350 328,308 347,300 364,303 384,318 403,325 442,366 460,385 480,383 500,393 519,402 538,400 560,386 576,378 596,385 616,388 655,388 673,380 691,363 711,348 730,352 750,365 769,395 788,427 807,452 846,475 884,510 922,560 942,580 980,590 1019,573 1038,525 1057,515'],
  [900, 340, 3, '0,150 16,146 35,136 54,180 73,222 93,268 112,295 131,306 150,303 170,292 190,272 229,283 266,305 286,310 324,302 344,296 362,315 382,335 400,365 421,390 439,402 479,395 516,390 536,375 556,362 575,353 593,355 613,368 652,395 670,402 728,401 766,411 800,425 823,455 844,470 862,487 881,515 901,540 920,558 940,570 959,605 979,635 998,648 1016,575 1036,510 1054,440 1074,360 1093,225 1112,90']]);
curve(P, '#009a44', 2, [[180, 160, 3, '20,542 70,533 100,536 145,551 220,552 262,559 295,570 320,587 360,604 400,621 440,638 480,657 520,668 543,668 575,671 660,671 690,662 735,643 790,620 830,602 849,588 870,565 890,543 925,507 945,497 985,461 1040,418 1070,397'],
  [540, 220, 3, '0,214 15,212 35,215 80,215 120,210 160,209 190,212 211,226 230,245 249,260 270,264 300,279 328,288 347,298 365,312 380,318 425,318 460,331 500,348 545,364 575,367 600,363 655,363 680,369 716,372 780,385 812,395 846,402 865,411 920,437 940,452 980,471 1019,485 1040,486 1060,495'],
  [900, 340, 3, '0,147 40,165 70,180 95,200 128,211 185,227 228,234 265,246 300,254 325,256 343,273 362,290 400,309 435,323 485,328 540,341 600,353 690,377 720,386 795,390 835,401 880,418 920,444 940,456 960,474 998,503 1036,485 1075,477 1093,460 1112,418']]);
curve(P, '#3070f8', 2, [[180, 160, 3, '20,640 60,626 80,630 100,642 140,669 175,680 205,675 252,685 272,705 290,717 311,733 330,741 368,742 388,731 407,723 430,708 463,722 484,762 503,780 525,796 600,799 615,795 695,795 735,800 765,814 790,831 812,830 830,821 850,807 866,776 887,752 907,716 925,722 948,722 985,683 1003,669 1041,609 1080,580'],
  [540, 220, 3, '20,387 37,393 57,389 100,389 118,378 150,373 175,374 192,388 211,418 230,452 249,470 290,474 305,467 328,465 347,459 365,435 382,443 420,447 440,460 460,468 500,468 538,476 557,470 578,473 660,457 690,453 716,447 740,453 765,462 788,469 807,488 826,500 846,509 865,528 884,549 904,590 940,630 961,645 1019,680 1060,678'],
  [900, 340, 3, '0,309 20,302 55,306 75,326 93,369 128,384 165,384 190,394 225,402 270,420 325,432 343,394 362,408 400,426 458,444 479,437 495,447 525,447 555,438 585,438 670,456 690,450 710,435 740,431 785,441 800,450 823,486 850,504 881,544 901,580 920,604 936,606 959,654 980,690 1005,720 1036,750 1072,758 1093,798 1101,870 1110,929']]);
curve(P, '#ff6820', 2, [[180, 160, 3, '20,444 40,438 65,438 125,434 170,427 270,429 292,422 322,435 345,450 370,475 390,492 410,520 432,548 462,567 485,549 515,543 543,545 560,534 580,540 607,541 637,551 672,542 697,523 720,507 745,483 770,457 790,407 820,393 849,368 870,366 885,348 907,336 925,292 945,270 966,258 985,243 1003,231 1040,228 1060,210 1080,217'],
  [540, 220, 3, '20,37 40,36 60,38 120,38 130,42 190,44 211,36 230,47 265,54 290,73 305,93 328,112 347,138 362,186 380,190 435,190 462,195 480,210 500,229 530,237 555,258 575,261 632,264 670,282 715,300 740,306 790,307 820,298 865,293 900,272 920,260 960,277 990,282 1018,293 1040,291 1060,310 1080,342'],
  [900, 340, 3, '18,12 30,21 50,33 72,42 95,31 128,42 165,62 240,63 325,79 343,151 365,168 380,175 420,203 440,211 495,219 535,243 575,259 625,268 680,288 708,327 727,339 795,334 830,313 860,306 903,291 925,297 940,302 965,295 998,293 1016,252 1036,214 1056,204 1075,192 1093,126 1096,60 1100,0 1112,-90']]);

rect(P, 184, 242, 1130, 2, '#0000ff');
add(P, 'path', { d: 'M1209.500 682L1312 258', stroke: '#0000f0', 'stroke-width': 2, fill: 'none' });
for (const [x, y] of [[1233, 583], [1303, 294]]) add(P, 'rect', { x: x - 2.5, y: y - 2.5, width: 6, height: 6, fill: '#fff', stroke: '#0000f0' });
rect(P, 1311, 114, 3, 238, RED);
rect(P, 1311, 352, 3, 238, BLUE);
for (const [x, y, s, c] of [[365, 331, '6,510', 'r'], [309, 347, '6,880', 'r'], [277, 416, '5,990'], [354, 449, '5,720'], [552, 363, '6,420'], [649, 291, '6,830', 'r'],
  [687, 380, '6,280'], [758, 302, '6,740', 'r'], [886, 323, '6,570', 'r'], [847, 450, '5,720'], [931, 510, '5,230'], [1027, 519, '5,160'], [1014, 414, '5,840', 'r'],
  [1078, 438, '5,640', 'r'], [1226, 596, '4,530'], [1270, 138, '8,070', 'r']])
  add(P, 'text', { x, y, class: 'peak', fill: c ? RED : '#0000e0' }, s);
label(P, 1248, 126, '최고 8,070(2023/10/17, -5.82%)', RED, 'end');
add(P, 'path', { d: 'M1249 122.500h20M1265 119.500l4 3-4 3', stroke: RED, fill: 'none' });
label(P, 1204, 608, '최저 4,530(2023/10/05, +67.77%)', BLUE, 'end');
add(P, 'path', { d: 'M1205 604.500h20M1221 601.500l4 3-4 3', stroke: BLUE, fill: 'none' });
label(P, 1157, 587, '4,526( 76 ° )', '#0000e0');
label(P, 1219, 295, '6,864(+51.66 %)', '#0000e0');
legend(P, 111, [[190, '대기매물', '#000'], [250, '휴니드', '#000', 'bold-label'], [301, '가격이평 5', '#50a000'], [373, '10', '#4848ff'], [397, '20', '#1880e0'],
  [421, '60', '#0000c8'], [445, '120', '#801050'], [474, '240', '#ff4040'], [505, 'BB_상한선(20,2,c)', '#ff6820'], [618, 'BB_중심선', '#009a44'], [685, 'BB_하한선', '#3070f8']]);

function axis(p, y, h) { rect(p, 1314, y, 66, h, '#efefef'); rect(p, 1314, y, 1, h, '#bbb'); }
axis(P, 97, 585);
for (let v = 8100; v >= 3800; v -= 100) rect(P, 1315, Math.round(py(v)), v % 500 ? 2 : 4, 1, '#bbb');
for (const v of [8000, 7000, 6500, 6000, 5500, 5000, 4500, 4000]) label(P, 1325, Math.round(py(v)) + 4, v.toLocaleString('en-US'), '#000');
add(P, 'path', { d: 'M1314 203.500l6-5v10z', fill: RED });
rect(P, 1322, 195, 50, 28, '#ff0000');
label(P, 1324, 207, '7,600', '#fff');
label(P, 1323, 221, '(18.75%)', '#fff');
add(P, 'rect', { x: 1314.5, y: 235.5, width: 35, height: 15, fill: '#e0ffe0', stroke: '#000' });
label(P, 1317, 247, '7,280', '#000');

/* ---------- volume ---------- */
const V = document.getElementById('volume');
for (const [x] of MONTHS) rect(V, x, 684, 1, 54, GRID);
for (const y of [710, 724]) rect(V, 184, y, 1130, 1, GRID);
for (let i = 0; i < 164; i++) dayBar(V, i, 738, 1, (i * 7) % 5 < 3 ? BLUE : RED);
for (const [x, y, w, c] of [[511, 735, 6, RED], [517, 736, 40, '#50a000'], [886, 734, 6, RED], [892, 736, 24, '#50a000'], [1236, 727, 5, RED], [1242, 731, 6, BLUE], [1249, 737, 5, BLUE],
  [1255, 732, 6, RED], [1262, 708, 5, RED], [1268, 701, 5, RED]]) rect(V, x, y, w, (c === '#50a000' ? 738 : 739) - y, c);
rect(V, 187, 737, 1084, 1, '#501030');
curve(V, '#50a000', 1, [[1060, 680, 3, '520,172 535,166 560,160 597,157 615,138 630,126']]);
curve(V, '#1880e0', 1, [[1060, 680, 3, '540,170 600,169 630,161']]);
legend(V, 696, [[190, '거래량', '#000'], [238, '거래이평 5', '#50a000'], [310, '20', '#1880e0'], [334, '60', '#0000c8'], [358, '120', '#801050']]);
label(V, 186, 711, '상장주식수(14,116,015) 회전율(93.01%)', '#000');
axis(V, 682, 58);
for (const [y, w] of [[703, 2], [710, 4], [717, 2], [724, 4], [731, 2], [738, 4]]) rect(V, 1315, y, w, 1, '#bbb');
label(V, 1367, 714, '10,000K', '#000', 'end');
label(V, 1367, 728, '5,000K', '#000', 'end');
label(V, 1367, 738, '0K', '#000', 'end');
rect(V, 184, 682, 1196, 1, '#808080');

/* ---------- MACD ---------- */
const M = document.getElementById('macd');
for (const [x] of MONTHS) rect(M, x, 742, 1, 72, GRID);
rect(M, 184, 763, 1130, 1, GRID);
rect(M, 184, 789, 1128, 1, '#ff99cc');
const OSC = [7, 7, 4, -5, -10, -14, -17, -20, -17, -13, -13, -10, -8, -10, -10, -13, -13, -12, -8, -2, 2, 4, -5, -8, -13, -14, -14, -8, 7, 10, 10, 10, 10, 10, 13, 16, 16, 19, 19, 22,
  25, 20, 16, 16, 13, 16, 16, 22, 19, 13, 13, 10, 7, 7, 7, -8, -17, -22, -22, -22, -19, -17, -17, -17, -14, -17, -20, -26, -26, -20, -11, -8, -5, -4, -5, -8, -5, -8, -8, -8,
  -8, -5, -8, -5, 2, 4, 3, 3, 2, 3, 5, 6, 5, 3, 2, -3, -5, -6, -8, -9, -10, -12, -13, -13, -11, -9, -6, -3, 3, 10, 13, 12, 9, 5, -3,
  -9, -14, -15, -14, -13, -12, -12, -12, -10, -9, -6, -5, -3, 3, 3, -5, -7, -6, -4, -2, 2, 3, 4, 7, 10, 10, 7, 7, 4, 4, 4, 4, 4, 4, 4, 2, 4, -2, -4, -7, -7, -10, -13, -14, -13, -16, -17, -17, -17,
  13, 32, 32, 34, 49, 79];
const first = 170 - OSC.length;
OSC.forEach((v, i) => {
  const h = Math.max(1, Math.round(Math.abs(v) / 3));
  const day = i < 60 ? i : i + first;
  dayBar(M, day, v > 0 ? 790 - h : 789, h, v > 0 ? '#ff99cc' : '#99ccff');
});
curve(M, '#ff6600', 1, [[180, 680, 2.8, '20,295 40,295 75,303 110,322 135,328 165,333 225,337 250,338 285,349 340,349 380,340 420,346 450,357 490,365 515,349 560,342 600,333 640,325 680,315 700,303 740,288 790,288 850,273 870,260 885,259 905,265 935,259 960,262 990,259 1010,273 1050,300 1080,310 1120,310 1180,318 1230,342 1260,347 1330,335 1380,342 1420,349 1480,350 1510,352 1530,345'],
  [0, 680, 1, '740,346 790,351 830,366 860,371 884,368 900,343 925,347 950,370 980,377 1030,369'],
  [1060, 680, 3, '0,370 45,361 80,351 130,353 190,354 250,349 320,356 380,370 430,376 480,385 515,395 535,365 555,342 575,332 600,305 615,285 632,247']]);
curve(M, '#3070f8', 1, [[180, 680, 2.8, '20,301 80,301 110,306 150,315 210,325 300,333 340,343 430,343 500,353 560,349 630,337 700,325 740,310 850,287 940,268 1000,266 1060,282 1110,294 1200,312 1250,328 1300,333 1400,338 1480,345'],
  [0, 680, 1, '740,346 800,347 850,360 890,362 930,352 980,364 1020,371'],
  [1060, 680, 3, '0,368 65,367 130,357 240,352 330,354 410,360 470,369 520,380 550,375 600,352 625,330']]);
legend(M, 755, [[190, 'MACD(12,26,9,c)', '#ff6600'], [292, 'Signal', '#3070f8'], [340, 'MACD Osc', '#ff99cc']]);
axis(M, 740, 76);
for (const [y, w] of [[763, 4], [768, 2], [774, 2], [779, 2], [784, 2], [789, 4]]) rect(M, 1315, y, w, 1, '#bbb');
label(M, 1361, 766, '250.00', '#000', 'end');
label(M, 1361, 793, '0.00', '#000', 'end');
rect(M, 184, 740, 1196, 1, '#808080');

/* ---------- dates ---------- */
const T = document.getElementById('time');
rect(T, 184, 816, 1196, 17, '#efefef');
rect(T, 184, 816, 1196, 1, '#bbb');
rect(T, 184, 832, 1196, 1, '#bbb');
rect(T, 1314, 816, 1, 17, '#bbb');
MONTHS.forEach(([x, s], i) => { rect(T, x, 816, 1, 6, '#bbb'); label(T, x + 1, 829, s, '#000', 'start', i ? '' : 'bold-label'); });
label(T, 1325, 829, '10/22', '#000');

/* ---------- chart types ---------- */
const types = document.getElementById('types');
['봉차트', '바차트(시고저종)', '바차트(고저종)', '종가선차트', 'Mountain 차트', 'P&F차트', '삼선전환도', 'Swing차트', 'Kagi차트', 'Renko차트', '역시계곡선',
  'CandleVolume', 'EquiVolume', 'FLOW차트', '분산형차트', '계단 차트', '점 차트', 'PV차트', 'POLE차트', 'Heikin-Ashi 차트', '중간선 차트'].forEach((name, i) => {
  const row = document.createElement('div');
  row.className = 'leaf';
  const input = Object.assign(document.createElement('input'), { type: 'radio', name: 'type', id: 'type' + i, checked: i === 0 });
  const text = Object.assign(document.createElement('label'), { htmlFor: input.id, textContent: name });
  row.append(input, text);
  types.append(row);
});

/* ---------- drawing tools ---------- */
document.getElementById('draw').innerHTML = [
  ['loop', 'gear'],
  ['circle', 'bars', 'draw-cross', 'draw-h', 'draw-v', 'slash', 'auto', 'text-plus', 'all', 'candles', 'search-i', 'search-list', 'search-chart', 'signal', 'zig', 'fib', 'vlines', 'undo', 'redo', 'search'],
].map(set => `<div class="set">${set.map(id => `<button class="bare${id === 'search-i' ? ' pressed' : ''}" aria-label="${id}"><svg><use href="#${id}"/></svg></button>`).join('')}</div>`).join('');
```
